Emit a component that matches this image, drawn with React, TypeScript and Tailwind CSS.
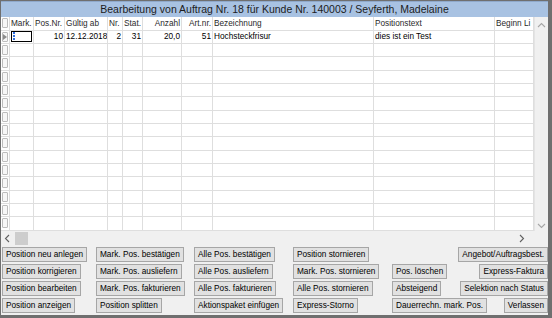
import React from 'react';

type Col = { label: string; right?: boolean };

const columns: Col[] = [
  { label: 'Mark.' },
  { label: 'Pos.Nr.' },
  { label: 'Gültig ab' },
  { label: 'Nr.' },
  { label: 'Stat.' },
  { label: 'Anzahl', right: true },
  { label: 'Art.nr.', right: true },
  { label: 'Bezeichnung' },
  { label: 'Positionstext' },
  { label: 'Beginn Li' },
];

const firstRow: { text: string; right?: boolean }[] = [
  { text: '' },
  { text: '10', right: true },
  { text: '12.12.2018' },
  { text: '2', right: true },
  { text: '31', right: true },
  { text: '20,0', right: true },
  { text: '51', right: true },
  { text: 'Hochsteckfrisur' },
  { text: 'dies ist ein Test' },
  { text: '' },
];

const gridCols =
  'grid grid-cols-[9px_24px_31px_43px_15px_20px_39px_31px_161px_121px_39px]';

function RowHandle({ current }: { current?: boolean }) {
  return (
    <div className="h-full flex items-center border-r border-[#dedede]">
      <div className="ml-[1px] w-[6px] h-[10px] border border-[#bcbcbc] bg-[#f7f7f7] rounded-[1px] flex items-center justify-center">
        {current && (
          <svg width="4" height="6" viewBox="0 0 4 6">
            <polygon points="0,0 4,3 0,6" fill="#8c8c8c" />
          </svg>
        )}
      </div>
    </div>
  );
}

function Chevron({ dir, color }: { dir: 'up' | 'down' | 'left' | 'right'; color: string }) {
  const pts = {
    up: '1,6 4.5,2.5 8,6',
    down: '1,3 4.5,6.5 8,3',
    left: '6,1 2.5,4.5 6,8',
    right: '3,1 6.5,4.5 3,8',
  }[dir];
  return (
    <svg width="9" height="9" viewBox="0 0 9 9">
      <polyline points={pts} fill="none" stroke={color} strokeWidth="1.1" />
    </svg>
  );
}

function Btn({ children }: { children: React.ReactNode }) {
  return (
    <button className="h-[15px] px-[3px] border border-[#a6a6a6] bg-[#e1e1e1] text-[8.25px] leading-[13px] text-black whitespace-nowrap">
      {children}
    </button>
  );
}

export default function App() {
  return (
    <div className="w-[552px] h-[318px] bg-[#6f6f6f] pt-[1px] pl-[1px] pr-[4px] pb-[3px] font-['Liberation_Sans',Arial,sans-serif]">
      <div className="w-full h-full flex flex-col bg-[#f0f0f0]">
        {/* title */}
        <div className="h-[16px] shrink-0 bg-[#a8c2e2] border-t border-[#8fa9cb] flex items-center justify-center text-[10.5px] text-[#1c1c1c]">
          Bearbeitung von Auftrag Nr. 18 für Kunde Nr. 140003 / Seyferth, Madelaine
        </div>

        {/* grid + vertical scrollbar */}
        <div className="flex shrink-0">
          <div className="w-[533px] bg-white overflow-hidden">
            <div className={`${gridCols} h-[13.67px] border-b border-[#dedede] text-[8.25px] text-[#2a2a2a]`}>
              <RowHandle />
              {columns.map((c) => (
                <div
                  key={c.label}
                  className={`border-r border-[#dedede] px-[1px] overflow-hidden whitespace-nowrap leading-[13px] ${c.right ? 'text-right' : 'text-left'}`}
                >
                  {c.label}
                </div>
              ))}
            </div>
            {Array.from({ length: 15 }).map((_, r) => (
              <div
                key={r}
                className={`${gridCols} h-[13.33px] border-b border-[#dedede] text-[8.25px] text-black`}
              >
                <RowHandle current={r === 0} />
                {columns.map((c, i) => {
                  const cell = r === 0 ? firstRow[i] : { text: '' };
                  if (r === 0 && i === 0) {
                    return (
                      <div key={i} className="border-r border-[#dedede] p-[1px] pt-0">
                        <div className="h-full border border-black flex items-center pl-[1px]">
                          <div className="w-[2px] h-[8px] border-l-2 border-dotted border-[#2f6fe0]" />
                        </div>
                      </div>
                    );
                  }
                  return (
                    <div
                      key={i}
                      className={`border-r border-[#dedede] px-[1px] overflow-hidden whitespace-nowrap leading-[12px] ${cell.right ? 'text-right' : 'text-left'}`}
                    >
                      {cell.text}
                    </div>
                  );
                })}
              </div>
            ))}
          </div>
          <div className="w-[14px] flex flex-col items-center justify-between bg-[#f0f0f0] border-l border-[#e4e4e4] pt-[4px] pb-[1px]">
            <Chevron dir="up" color="#a6a6a6" />
            <Chevron dir="down" color="#a6a6a6" />
          </div>
        </div>

        {/* horizontal scrollbar */}
        <div className="h-[15px] shrink-0 flex">
          <div className="w-[533px] flex items-center bg-[#f0f0f0] pl-[2px] pr-[8px]">
            <Chevron dir="left" color="#606060" />
            <div className="ml-[3px] w-[13px] h-[13px] bg-[#cdcdcd]" />
            <div className="flex-1" />
            <Chevron dir="right" color="#606060" />
          </div>
          <div className="w-[14px] bg-[#f0f0f0]" />
        </div>

        {/* buttons */}
        <div className="flex-1 grid grid-cols-[94px_98px_99px_99px_1fr] grid-rows-[15px_15px_15px_15px] gap-y-[2px] justify-items-start items-start pl-[1px] pt-[1.33px]">
          <Btn>Position neu anlegen</Btn>
          <Btn>Mark. Pos. bestätigen</Btn>
          <Btn>Alle Pos. bestätigen</Btn>
          <Btn>Position stornieren</Btn>
          <div className="w-full flex justify-end">
            <Btn>Angebot/Auftragsbest.</Btn>
          </div>

          <Btn>Position korrigieren</Btn>
          <Btn>Mark. Pos. ausliefern</Btn>
          <Btn>Alle Pos. ausliefern</Btn>
          <Btn>Mark. Pos. stornieren</Btn>
          <div className="w-full flex justify-between">
            <Btn>Pos. löschen</Btn>
            <Btn>Express-Faktura</Btn>
          </div>

          <Btn>Position bearbeiten</Btn>
          <Btn>Mark. Pos. fakturieren</Btn>
          <Btn>Alle Pos. fakturieren</Btn>
          <Btn>Alle Pos. stornieren</Btn>
          <div className="w-full flex justify-between">
            <Btn>Absteigend</Btn>
            <Btn>Selektion nach Status</Btn>
          </div>

          <Btn>Position anzeigen</Btn>
          <Btn>Position splitten</Btn>
          <Btn>Aktionspaket einfügen</Btn>
          <Btn>Express-Storno</Btn>
          <div className="w-full flex justify-between">
            <Btn>Dauerrechn. mark. Pos.</Btn>
            <Btn>Verlassen</Btn>
          </div>
        </div>
      </div>
    </div>
  );
}
